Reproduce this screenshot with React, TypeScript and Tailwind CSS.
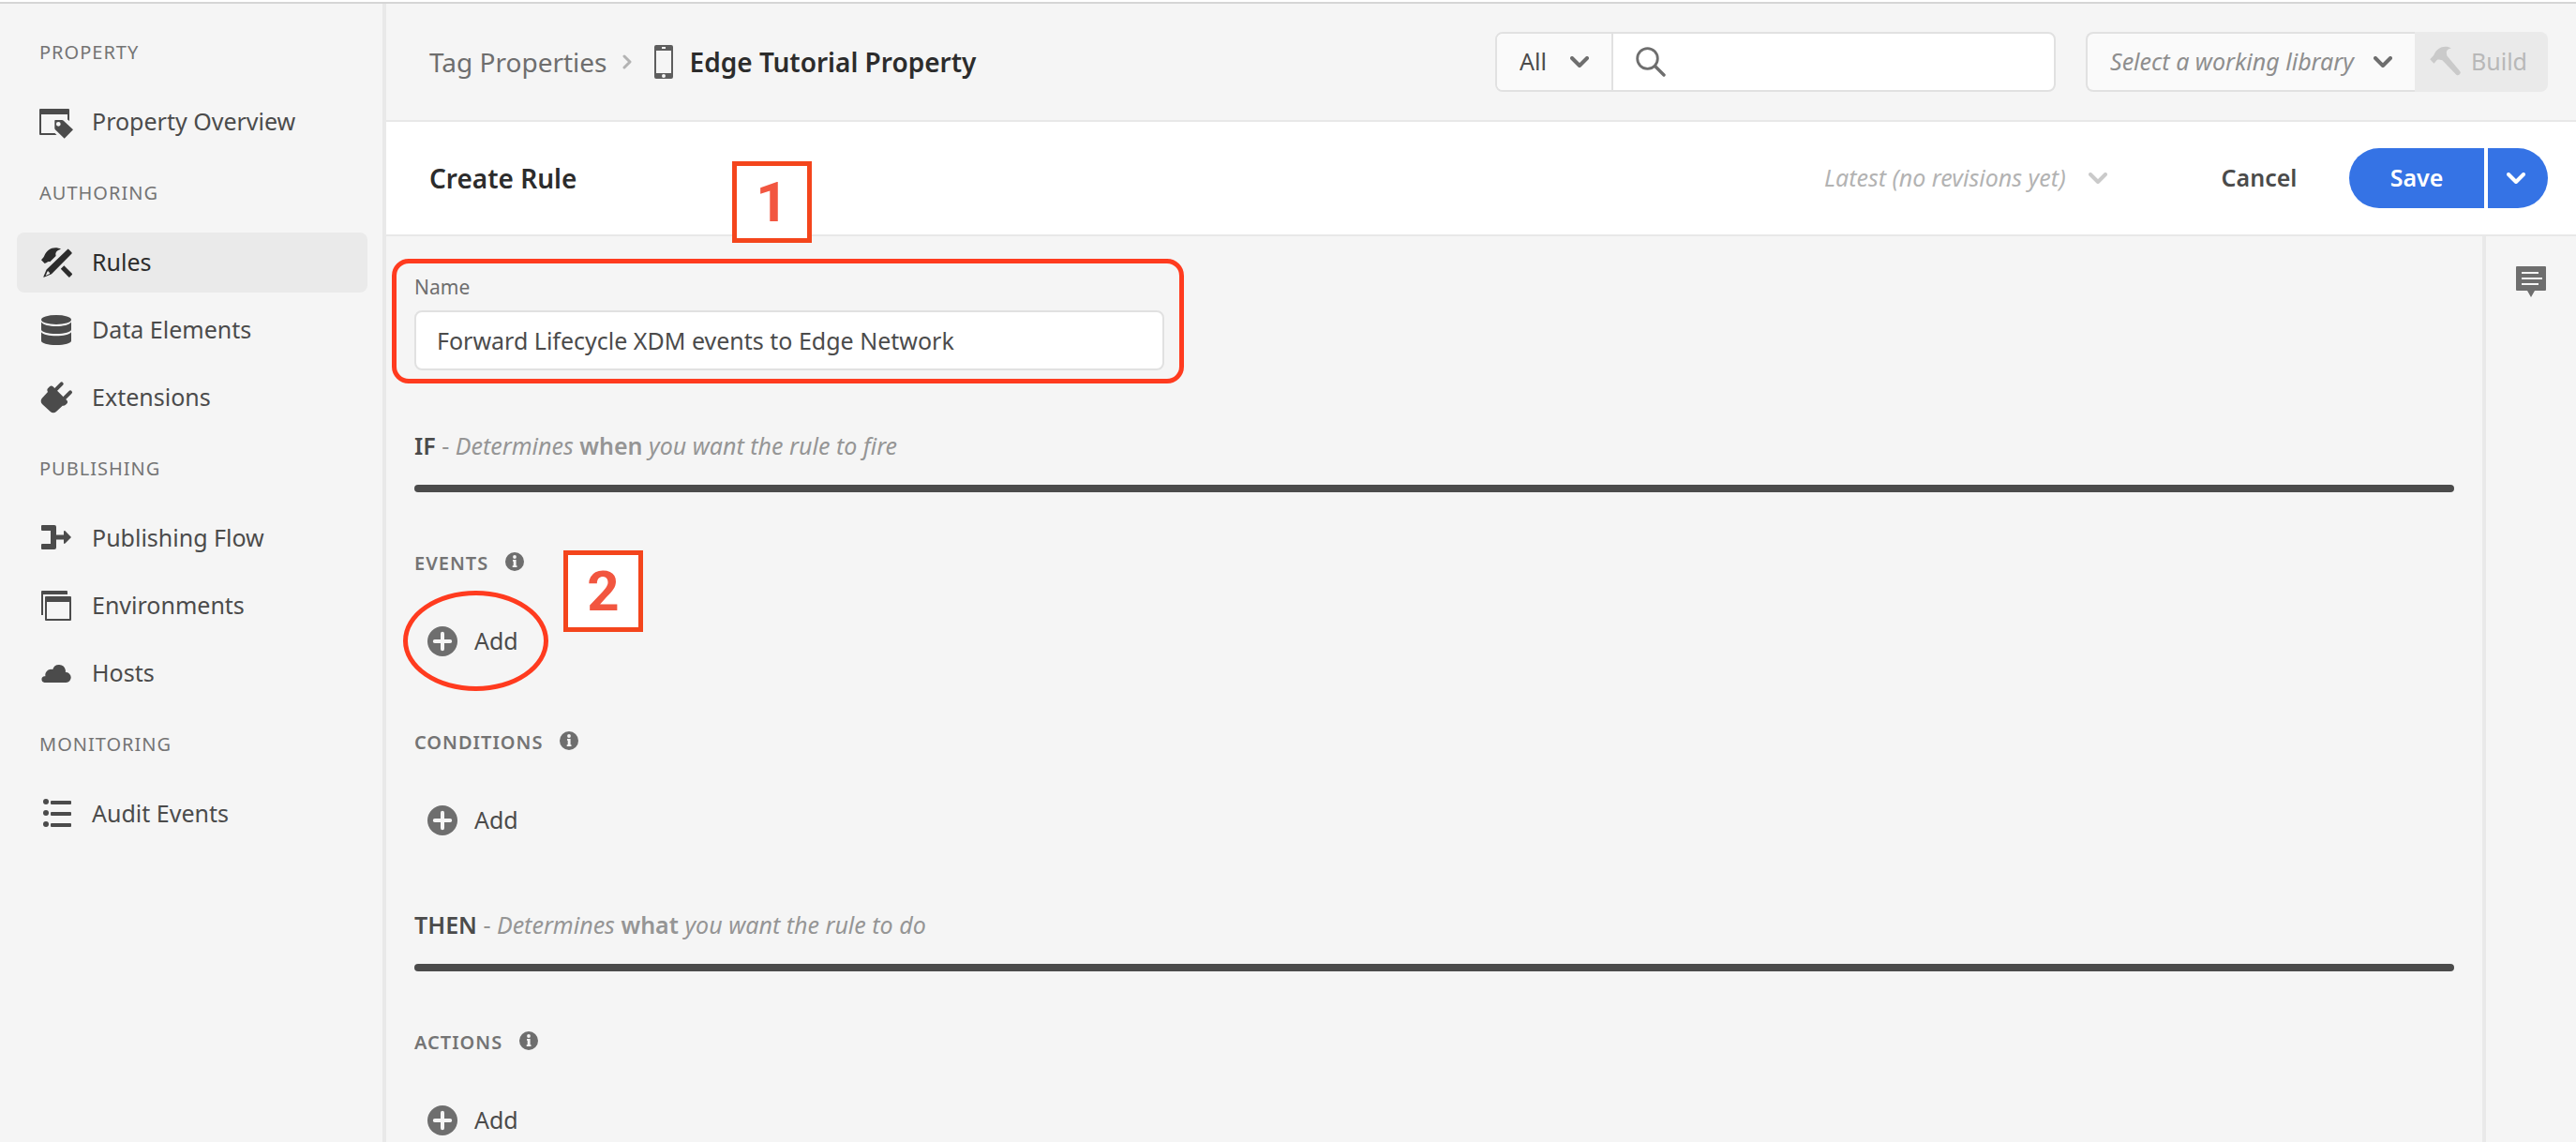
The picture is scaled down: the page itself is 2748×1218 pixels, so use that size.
import React, { useState } from "react";

type IconProps = { className?: string; children?: React.ReactNode };

function Icon({ className = "", children }: IconProps) {
  return (
    <svg viewBox="0 0 36 36" aria-hidden="true" fill="currentColor" className={`size-9 shrink-0 ${className}`}>
      {children}
    </svg>
  );
}

const PropertyIcon = () => (
  <Icon>
    <path d="M1 4h30a1 1 0 0 1 1 1v12l-2-1.600V10H2v20h14.500l2 2H1a1 1 0 0 1-1-1V5a1 1 0 0 1 1-1z" />
    <path
      fillRule="evenodd"
      d="M17 16h7.200a2 2 0 0 1 1.300.500L36 26.200l-9.300 9.500-9.800-9.500a2 2 0 0 1-.600-1.400V16.700a.7.7 0 0 1 .7-.7zm3.300 1.900a2.400 2.400 0 1 0 0 4.800 2.400 2.400 0 0 0 0-4.800z"
    />
  </Icon>
);

const RulesIcon = () => (
  <Icon>
    <path d="M2 15.300c1-1.600 2.500-2.200 3.200-4.300C7.500 5.500 12 2.300 17 2.300c2.400 0 4.600.500 6 1.500-3 .6-5.300 2.300-5.700 4.900l.3 2.300-6.300 6.200c-1.500-.600-2.500-.200-3.300.9L5.700 19z" />
    <path d="M26.300 21.300l8.500 8.500a.8.8 0 0 1 0 1.100l-2.400 2.500a.8.8 0 0 1-1.100 0L22.800 24.800z" />
    <path
      fillRule="evenodd"
      d="M30 3.900a1 1 0 0 1 1.300 0l3.200 3.300a1 1 0 0 1 0 1.300L13 30.200 5.400 33.600c-.8.300-1.200-.100-.9-.900L7.600 25.600zM8.600 27.500l-1.900 4.400 4.300-1.900.1-1.400-1.200-.1-.1-1.200z"
    />
  </Icon>
);

const DataIcon = () => (
  <Icon>
    <ellipse cx="18" cy="7" rx="16" ry="5" />
    <path d="M2 9.500C4 12.500 10.500 14 18 14s14-1.500 16-4.500V17.500c0 2.600-7.200 4.500-16 4.500S2 20.100 2 17.500z" />
    <path d="M2 20.300C4 23 10.500 24.300 18 24.300s14-1.300 16-4V29.500c0 2.600-7.200 4.500-16 4.500S2 32.100 2 29.500z" />
  </Icon>
);

const PlugIcon = () => (
  <Icon>
    <path
      d="M23.700 3.300l-6 6M33 12.300l-6 6"
      fill="none"
      stroke="currentColor"
      strokeWidth="4"
      strokeLinecap="round"
    />
    <path d="M9 8.200l2-2c1-1 2.500-1 3.500 0L29.300 21c1 1 1 2.500 0 3.500l-1.300 1.300c-1 1-2 1.200-3.300 1L18 33c-1.800 1.600-4.500 1.600-6.300 0L3 25c-1.800-1.900-1.800-4.700 0-6.500L9 12c-.800-1.300-.900-2.800 0-3.800z" />
  </Icon>
);

const FlowIcon = () => (
  <Icon>
    <path d="M3 4h13a2 2 0 0 1 2 2v8.500h8V11c0-1 .8-1.300 1.500-.7L34 17l-6.500 6.500c-.700.700-1.500.400-1.500-.6v-3.400h-8V28a2 2 0 0 1-2 2H3a1 1 0 0 1-1-1v-4a1 1 0 0 1 1-1h9V10H3a1 1 0 0 1-1-1V5a1 1 0 0 1 1-1z" />
  </Icon>
);

const EnvironmentsIcon = () => (
  <Icon>
    <path d="M3 2h26a1 1 0 0 1 1 1v3H4v22H2V3a1 1 0 0 1 1-1z" />
    <path fillRule="evenodd" d="M7 8h26a1 1 0 0 1 1 1v24a1 1 0 0 1-1 1H7a1 1 0 0 1-1-1V9a1 1 0 0 1 1-1zm1 6v18h24V14z" />
  </Icon>
);

const CloudIcon = () => (
  <Icon>
    <path d="M28.500 28h-23a3.400 3.400 0 0 1-.4-6.700l1.300-.100a6.200 6.200 0 0 1 7.800-7.200A7 7 0 0 1 27.800 14.500c.2.800.2 1.600.1 2.500a5.500 5.500 0 0 1 .6 11z" />
  </Icon>
);

const ListIcon = () => (
  <Icon>
    <circle cx="7" cy="5" r="3" />
    <circle cx="7" cy="17" r="3" />
    <circle cx="7" cy="29" r="3" />
    <rect x="12" y="4" width="22" height="4" rx="1" />
    <rect x="12" y="16" width="22" height="4" rx="1" />
    <rect x="12" y="28" width="22" height="4" rx="1" />
  </Icon>
);

const HammerIcon = () => (
  <Icon className="text-[#cacaca]">
    <path d="M2.200 15.300l4-4.300C9 4.500 13.500 1.700 18.600 1.700c2.600 0 4.700.500 6.200 1.700-3.100.3-5 2.300-5 4.900l.6 3.200L33.800 27.600a2.600 2.600 0 0 1-3.700 3.800L15.400 16.200l-3.600-.7c-1.600-.2-2.500.5-3 1.600l-2.300 2.600z" />
  </Icon>
);

const PhoneIcon = () => (
  <Icon className="text-[#5e5e5e]">
    <path
      fillRule="evenodd"
      d="M10 0h16a2 2 0 0 1 2 2v32a2 2 0 0 1-2 2H10a2 2 0 0 1-2-2V2a2 2 0 0 1 2-2zm0 6v24h16V6zm6-4v2h4V2zm2 29a2 2 0 1 0 0 4 2 2 0 0 0 0-4z"
    />
  </Icon>
);

const SearchIcon = () => (
  <svg viewBox="0 0 32 32" aria-hidden="true" className="size-8 shrink-0" fill="none" stroke="#6e6e6e" strokeLinecap="round">
    <circle cx="12.500" cy="12.500" r="10.800" strokeWidth="2.800" />
    <path d="M20.500 20.500l9.500 9.500" strokeWidth="3.400" />
  </svg>
);

const CommentIcon = () => (
  <Icon className="text-[#6e6e6e]">
    <path
      fillRule="evenodd"
      d="M3 2h30a1 1 0 0 1 1 1v24a1 1 0 0 1-1 1h-11l-4 7-4-7H3a1 1 0 0 1-1-1V3a1 1 0 0 1 1-1zM8 8v2h18V8zm0 6v2h22v-2zm0 6v2h18v-2z"
    />
  </Icon>
);

function Chevron({ className = "" }: { className?: string }) {
  return (
    <svg viewBox="0 0 20 12" aria-hidden="true" className={`h-3 w-5 shrink-0 ${className}`}>
      <path d="M2 2l8 8 8-8" fill="none" stroke="currentColor" strokeWidth="4" strokeLinecap="round" strokeLinejoin="round" />
    </svg>
  );
}

function InfoIcon() {
  return (
    <svg viewBox="0 0 20 20" aria-hidden="true" className="size-5">
      <circle cx="10" cy="10" r="10" fill="#6e6e6e" />
      <circle cx="10" cy="5" r="1.900" fill="#f5f5f5" />
      <path d="M8 8h3.600v6.200H12.500V16H7.700v-1.800h1V9.700H8z" fill="#f5f5f5" />
    </svg>
  );
}

type NavItem = { label: string; icon: React.ReactNode; active?: boolean };

const NAV: { title: string; items: NavItem[] }[] = [
  { title: "PROPERTY", items: [{ label: "Property Overview", icon: <PropertyIcon /> }] },
  {
    title: "AUTHORING",
    items: [
      { label: "Rules", icon: <RulesIcon />, active: true },
      { label: "Data Elements", icon: <DataIcon /> },
      { label: "Extensions", icon: <PlugIcon /> },
    ],
  },
  {
    title: "PUBLISHING",
    items: [
      { label: "Publishing Flow", icon: <FlowIcon /> },
      { label: "Environments", icon: <EnvironmentsIcon /> },
      { label: "Hosts", icon: <CloudIcon /> },
    ],
  },
  { title: "MONITORING", items: [{ label: "Audit Events", icon: <ListIcon /> }] },
];

function Sidebar() {
  return (
    <nav aria-label="Property navigation" className="w-[412px] shrink-0 border-r-4 border-[#e9e9e9] pt-4 pr-4 pl-[18px]">
      {NAV.map((group) => (
        <section key={group.title}>
          <h2 className="px-6 pt-6 pb-[30px] text-[20px] leading-6 tracking-[1px] text-[#747474]">{group.title}</h2>
          <ul>
            {group.items.map((item) => (
              <li key={item.label} className="mb-2">
                <a
                  href="#"
                  aria-current={item.active ? "page" : undefined}
                  className={
                    item.active
                      ? "flex h-16 items-center gap-5 rounded-lg bg-[#eaeaea] px-6 text-[#2c2c2c]"
                      : "flex h-16 items-center gap-5 rounded-lg px-6 text-[#4b4b4b]"
                  }
                >
                  {item.icon}
                  {item.label}
                </a>
              </li>
            ))}
          </ul>
        </section>
      ))}
    </nav>
  );
}

function TopBar() {
  return (
    <header className="flex h-[126px] items-center justify-between border-b-2 border-[#e8e8e8] pr-[30px] pl-[46px]">
      <div className="flex items-center text-[28px]">
        <a href="#" className="text-[#6e6e6e]">
          Tag Properties
        </a>
        <svg viewBox="0 0 10 16" aria-hidden="true" className="mx-4 h-4 w-[10px]">
          <path d="M2 2l6 6-6 6" fill="none" stroke="#b3b3b3" strokeWidth="3" strokeLinecap="round" strokeLinejoin="round" />
        </svg>
        <PhoneIcon />
        <h1 className="ml-2.5 font-semibold text-[#2c2c2c]">Edge Tutorial Property</h1>
      </div>
      <div className="flex items-center gap-8">
        <div className="flex h-16 w-[598px] overflow-hidden rounded-lg border-2 border-[#e1e1e1] bg-white">
          <div className="relative w-[124px] shrink-0 border-r-2 border-[#e1e1e1] bg-[#fafafa]">
            <select aria-label="Search scope" className="h-full w-full appearance-none bg-transparent pl-6 text-[#4b4b4b]">
              <option>All</option>
            </select>
            <Chevron className="pointer-events-none absolute top-6 right-6 text-[#6e6e6e]" />
          </div>
          <label className="flex grow items-center gap-4 pl-6">
            <SearchIcon />
            <input type="search" aria-label="Search" className="h-full w-full min-w-0 outline-none" />
          </label>
        </div>
        <div className="flex h-16">
          <div className="relative w-[351px] rounded-l-lg border-2 border-r-0 border-[#e1e1e1] bg-[#fafafa]">
            <select
              aria-label="Working library"
              className="h-full w-full appearance-none bg-transparent pl-6 text-[#8e8e8e] italic"
            >
              <option>Select a working library</option>
            </select>
            <Chevron className="pointer-events-none absolute top-6 right-6 text-[#6e6e6e]" />
          </div>
          <button type="button" disabled className="flex w-[142px] items-center gap-2.5 rounded-r-lg bg-[#eaeaea] pl-[14px] text-[#b8b8b8]">
            <HammerIcon />
            Build
          </button>
        </div>
      </div>
    </header>
  );
}

function StepBadge({ step, className }: { step: string; className: string }) {
  return (
    <div
      className={`absolute flex h-[87px] w-[85px] items-center justify-center border-[5px] border-[#f4451c] bg-white font-[Roboto,sans-serif] text-[60px] leading-none font-bold text-[#f25640] ${className}`}
    >
      {step}
    </div>
  );
}

function ActionBar() {
  return (
    <div className="relative flex h-[122px] items-center justify-between border-b-2 border-[#e8e8e8] bg-white pr-[30px] pl-[46px]">
      <h2 className="text-[28px] font-semibold text-[#2c2c2c]">Create Rule</h2>
      <div className="flex items-center">
        <div className="relative w-[302px]">
          <select
            aria-label="Revision"
            disabled
            className="h-16 w-full appearance-none bg-transparent text-[#b3b3b3] italic opacity-100"
          >
            <option>Latest (no revisions yet)</option>
          </select>
          <Chevron className="pointer-events-none absolute top-[26px] right-0 text-[#cacaca]" />
        </div>
        <button type="button" className="ml-[94px] h-16 w-[136px] px-6 font-semibold text-[#4b4b4b]">
          Cancel
        </button>
        <div className="ml-7 flex h-16 gap-1 text-white">
          <button type="button" className="w-36 rounded-l-full bg-[#3573e5] font-semibold">
            Save
          </button>
          <button type="button" aria-label="More save options" className="flex w-16 items-center justify-center rounded-r-full bg-[#3573e5] pr-1">
            <Chevron />
          </button>
        </div>
      </div>
      <StepBadge step="1" className="top-[42px] left-[369px]" />
    </div>
  );
}

function SectionTitle({ name, word, rest }: { name: string; word: string; rest: string }) {
  return (
    <>
      <h3 className="leading-9 font-normal text-[#959595]">
        <strong className="font-semibold text-[#4b4b4b]">{name}</strong> - <em>Determines </em>
        <strong className="font-semibold">{word}</strong>
        <em> {rest}</em>
      </h3>
      <div className="mt-6 h-2 rounded-full bg-[#4b4b4b]" />
    </>
  );
}

function RuleGroup({ title, className, children }: { title: string; className: string; children?: React.ReactNode }) {
  return (
    <section className={className}>
      <div className="flex h-8 gap-[18px]">
        <h4 className="text-[20px] leading-8 font-semibold tracking-[1px] text-[#747474]">{title}</h4>
        <button type="button" aria-label={`About ${title.toLowerCase()}`} className="mt-1 size-5">
          <InfoIcon />
        </button>
      </div>
      <div className="relative mt-[47px] ml-[14px]">
        <button type="button" aria-label={`Add ${title.toLowerCase()}`} className="flex h-10 items-center gap-[18px] text-[#4b4b4b]">
          <svg viewBox="0 0 32 32" aria-hidden="true" className="size-8">
            <circle cx="16" cy="16" r="16" fill="#6e6e6e" />
            <path d="M16 7.800v16.400M7.800 16h16.400" stroke="#f5f5f5" strokeWidth="4" strokeLinecap="round" />
          </svg>
          Add
        </button>
        {children}
      </div>
    </section>
  );
}

export default function App() {
  const [name, setName] = useState("Forward Lifecycle XDM events to Edge Network");
  return (
    <div className="flex min-h-screen flex-col bg-[#f5f5f5] font-['Noto_Sans',sans-serif] text-[25px] text-[#4b4b4b]">
      <div className="h-1 border-b-2 border-[#d5d5d5] bg-white" />
      <div className="flex grow">
        <Sidebar />
        <div className="flex min-w-0 grow flex-col">
          <TopBar />
          <ActionBar />
          <div className="flex grow">
            <main className="min-w-0 grow px-[30px] pt-10">
              <div className="relative w-[800px]">
                <label htmlFor="rule-name" className="block text-[21px] leading-7 text-[#6e6e6e]">
                  Name
                </label>
                <input
                  id="rule-name"
                  type="text"
                  value={name}
                  onChange={(e) => setName(e.target.value)}
                  className="mt-[11px] block h-16 w-full rounded-lg border-2 border-[#e1e1e1] bg-white px-[22px]"
                />
                <div className="pointer-events-none absolute -top-4 -right-[21px] -bottom-[14px] -left-6 rounded-[18px] border-[5px] border-[#ff3b1f]" />
              </div>
              <div className="mt-[62px]">
                <SectionTitle name="IF" word="when" rest="you want the rule to fire" />
              </div>
              <RuleGroup title="EVENTS" className="mt-[60px]">
                <div className="pointer-events-none absolute -top-[34px] -left-[26px] h-[107px] w-[155px] rounded-[50%] border-[5px] border-[#ff3b1f]" />
                <StepBadge step="2" className="-top-[77px] left-[145px]" />
              </RuleGroup>
              <RuleGroup title="CONDITIONS" className="mt-[72px]" />
              <div className="mt-[73px]">
                <SectionTitle name="THEN" word="what" rest="you want the rule to do" />
              </div>
              <RuleGroup title="ACTIONS" className="mt-[60px]" />
            </main>
            <aside className="w-[100px] shrink-0 border-l-4 border-[#e9e9e9] pt-[30px] pl-[30px]">
              <button type="button" aria-label="Notes" className="block">
                <CommentIcon />
              </button>
            </aside>
          </div>
        </div>
      </div>
    </div>
  );
}
